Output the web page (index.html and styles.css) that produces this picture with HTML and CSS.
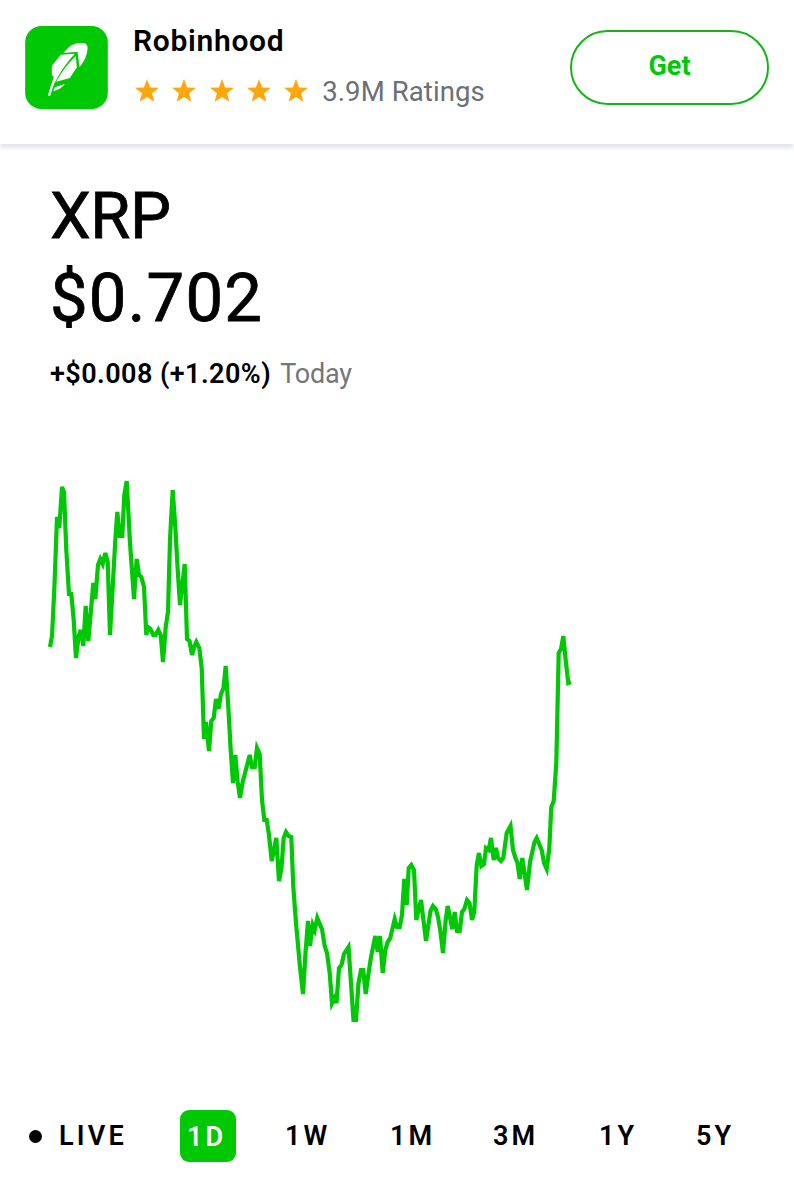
FILE: index.html
```
<!DOCTYPE html>
<html lang="en">
<head>
  <meta charset="UTF-8" />
  <meta name="viewport" content="width=device-width, initial-scale=1.0" />
  <title>XRP - Robinhood</title>
  <link rel="stylesheet" href="styles.css">
</head>
<body>
  <!-- App banner -->
  <header class="banner">
    <svg class="logo" viewBox="0 0 248 249">
      <rect width="248" height="249" rx="49" fill="#00c805"/>
      <g fill="#fff">
        <path d="M115 81C128 65 142 52 162 51L177 51Q189 55 187 70Q185 98 163 123L157 77Z"/>
        <path d="M107 86L80 119L80 147L86 153Q76 180 68 209L75 210Q80 190 88 172Q112 122 149 83Z"/>
        <path d="M152 90L155 124L134 156L93 167Q118 122 152 90Z"/>
        <path d="M89 184L119 174Q109 189 84 196Z"/>
      </g>
    </svg>
    <div class="app-info">
      <div class="app-name">Robinhood</div>
      <div class="rating">
        <div class="stars">
          <svg viewBox="0 0 24 23"><path d="M12 0L15.1 8.5L24 8.8L17 14.2L19.4 22.7L12 18L4.6 22.7L7 14.2L0 8.8L8.9 8.5Z"/></svg>
          <svg viewBox="0 0 24 23"><path d="M12 0L15.1 8.5L24 8.8L17 14.2L19.4 22.7L12 18L4.6 22.7L7 14.2L0 8.8L8.9 8.5Z"/></svg>
          <svg viewBox="0 0 24 23"><path d="M12 0L15.1 8.5L24 8.8L17 14.2L19.4 22.7L12 18L4.6 22.7L7 14.2L0 8.8L8.9 8.5Z"/></svg>
          <svg viewBox="0 0 24 23"><path d="M12 0L15.1 8.5L24 8.8L17 14.2L19.4 22.7L12 18L4.6 22.7L7 14.2L0 8.8L8.9 8.5Z"/></svg>
          <svg viewBox="0 0 24 23"><path d="M12 0L15.1 8.5L24 8.8L17 14.2L19.4 22.7L12 18L4.6 22.7L7 14.2L0 8.8L8.9 8.5Z"/></svg>
        </div>
        <span class="rating-count">3.9M Ratings</span>
      </div>
    </div>
    <button class="get-btn">Get</button>
  </header>

  <!-- Price -->
  <section class="quote">
    <h1 class="symbol">XRP</h1>
    <div class="price">$0.702</div>
    <div class="change"><strong>+$0.008 (+1.20%)</strong><span>Today</span></div>
  </section>

  <!-- Chart -->
  <svg class="chart" viewBox="0 440 794 620">
    <polyline points="50,647 52,636 54.5,585 57,517 59.3,528 62,487 64,492 66.3,550 69,594 71.3,594 73.7,620 76,658 78.5,637 80.8,630 83.3,646 85.7,606 88.3,641 91,610 93.3,583 95.3,599 98,565 100.3,559 102.7,564 105.3,553 107.7,562 110,635 112.7,587 115.3,540 117.3,512 119.7,536 122.3,536 124.3,495 126.7,481 130,543 134,599 136.7,559 139,575 141.3,577 144,587 146.3,635 148,627 150.5,629 153.3,635 155.7,635 158.3,630 160.7,635 163,662 165.7,627 168,612 170,540 172.7,490 175.3,527 177.7,570 180,605 182.5,583 184.7,564 187,639 189.5,641 192,655 194.5,646 196.3,642 199.3,648 201.7,668 204,739 206,722 209,751 211.3,721 213.7,718 216,699 218.5,709 221,694 223.5,688 225.7,666 228.3,707 230.7,750 233,783 235.3,755 237.7,782 240,798 242.7,782 245.3,772 249.7,755 252,767 254.7,767 257,748 259.7,754 262,800 264.3,820 266.7,820 269,835 271.7,861 274,850 276.3,838 279,881 281.5,868 283.7,838 286,832 288.7,836 291.3,837 293.3,887 296,923 300,967 303,994 305.5,953 308,921 310,946 312.7,925 314.7,930 317.3,918 319.7,924 322,929 324.7,946 327,953 329.7,973 332,1003 334.3,998 336.5,1003 339,968 341.5,965 344,954 348.5,947 351,983 353.5,1020 356,1020 358.5,983 361,970 363.3,970 365.7,994 368.3,975 371,957 375.3,936 377.7,952 380,936 382.7,973 385.3,950 387.7,942 390.3,938 394.7,919 397,927 399.7,927 402,915 404.3,879 406.7,905 408.7,868 411.3,865 414,870 416.3,920 421,900 426,941 430.5,911 433,906 435.7,909 438,917 440.5,932 443,953 445.7,920 447.7,906 452.3,929 454.7,912 457,931 459.7,931 462,912 464.3,909 467,900 469.5,903 472,920 474.3,912 476.7,865 479,853 481.3,866 484,864 486,848 488.7,850 491,838 493.7,860 496,848 498,858 501,861 503.3,858 506.7,833 510.5,826 513,850 515.5,858 517.5,863 519.7,879 522.3,858 527,890 530,862 534.5,842 536.7,838 541.7,850 544,863 546.7,869 549.3,848 551.3,807 553.7,801 556.3,763 558.7,653 561,649 563.3,636 566,663 568.3,683 571,682"/>
  </svg>

  <!-- Time ranges -->
  <nav class="ranges">
    <a class="range live"><i class="dot"></i>LIVE</a>
    <a class="range active">1D</a>
    <a class="range">1W</a>
    <a class="range">1M</a>
    <a class="range">3M</a>
    <a class="range">1Y</a>
    <a class="range">5Y</a>
  </nav>
</body>
</html>
```
FILE: styles.css
```
* {
  box-sizing: border-box;
}

body {
  margin: 0;
  width: 794px;
  height: 1200px;
  background: #fff;
  color: #000;
  font-family: Roboto, sans-serif;
  overflow: hidden;
}

.banner {
  display: flex;
  height: 144px;
  padding: 26px 25px 0;
  box-shadow: 0 4px 4px #e3e5ea;
}

.logo {
  width: 83px;
  height: 83px;
  flex-shrink: 0;
}

.app-info {
  margin-left: 25px;
  flex: 1;
}

.app-name {
  height: 30px;
  line-height: 30px;
  font-size: 30px;
  font-weight: 600;
  letter-spacing: 0.7px;
}

.rating {
  display: flex;
  align-items: center;
  height: 36px;
  margin: 17px 0 0 2px;
}

.stars {
  display: flex;
  gap: 13.3px;
}

.stars svg {
  width: 24px;
  height: 23px;
  margin-top: -2px;
  fill: #ffa60d;
}

.rating-count {
  margin-left: 14px;
  color: #6a7076;
  font-size: 27.5px;
  letter-spacing: 0.1px;
}

.get-btn {
  width: 199px;
  height: 75px;
  margin-top: 4px;
  padding: 0 0 4px;
  background: #fff;
  border: 2px solid #18b31c;
  border-radius: 38px;
  color: #00c805;
  font-family: inherit;
  font-size: 27px;
  font-weight: 700;
}

.quote {
  height: 296px;
  padding: 38px 50px 0;
}

.symbol {
  margin: 0;
  height: 77px;
  line-height: 68px;
  font-size: 65px;
  font-weight: 400;
  letter-spacing: -0.4px;
  -webkit-text-stroke: 0.8px #000;
}

.price {
  height: 84px;
  line-height: 78px;
  font-size: 67px;
  letter-spacing: 1.2px;
  -webkit-text-stroke: 0.8px #000;
}

.change {
  margin-top: 13px;
  line-height: 36px;
  font-size: 27px;
}

.change strong {
  font-weight: 600;
  letter-spacing: 0.45px;
}

.change span {
  margin-left: 9px;
  color: #73777b;
  letter-spacing: -0.2px;
}

.chart {
  display: block;
  width: 794px;
  height: 620px;
}

.chart polyline {
  fill: none;
  stroke: #00c805;
  stroke-width: 4.2;
}

.ranges {
  display: grid;
  grid-template-columns: 151px 105px 105px 103px 106px 97px auto;
  align-items: center;
  height: 151px;
  padding-left: 29px;
}

.range {
  padding-top: 1px;
  font-size: 27px;
  font-weight: 600;
  letter-spacing: 3.2px;
}

.live {
  display: flex;
  align-items: center;
}

.dot {
  width: 13px;
  height: 13px;
  margin-right: 17px;
  background: #000;
  border-radius: 50%;
}

.active {
  width: 56px;
  height: 52px;
  line-height: 52px;
  padding-left: 7px;
  background: #00c805;
  border-radius: 9px;
  color: #fff;
}
```
